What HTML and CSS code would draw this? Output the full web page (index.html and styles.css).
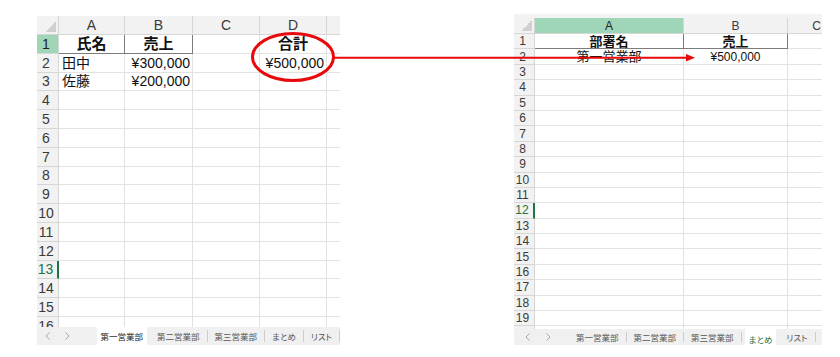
FILE: index.html
```html
<!DOCTYPE html>
<html lang="ja">
<head>
  <meta charset="UTF-8">
  <title>売上集計 - シート参照</title>
  <link rel="stylesheet" href="styles.css">
</head>
<body>
<div class="page">

  <!-- 左: 第一営業部シート -->
  <div class="sheet sheet-left">
    <div class="grid-wrap">
      <table class="grid">
        <colgroup>
          <col style="width:22px"><col style="width:66px"><col style="width:68px"><col style="width:67px"><col style="width:67px"><col style="width:67px">
        </colgroup>
        <tr class="col-head"><th class="corner"></th><th>A</th><th>B</th><th>C</th><th>D</th><th></th></tr>
        <tr><th class="row-sel">1</th><td class="h box">氏名</td><td class="h box">売上</td><td></td><td class="h">合計</td><td></td></tr>
        <tr><th>2</th><td class="txt">田中</td><td class="num">¥300,000</td><td></td><td class="num">¥500,000</td><td></td></tr>
        <tr><th>3</th><td class="txt">佐藤</td><td class="num">¥200,000</td><td></td><td></td><td></td></tr>
        <tr><th>4</th><td></td><td></td><td></td><td></td><td></td></tr>
        <tr><th>5</th><td></td><td></td><td></td><td></td><td></td></tr>
        <tr><th>6</th><td></td><td></td><td></td><td></td><td></td></tr>
        <tr><th>7</th><td></td><td></td><td></td><td></td><td></td></tr>
        <tr><th>8</th><td></td><td></td><td></td><td></td><td></td></tr>
        <tr><th>9</th><td></td><td></td><td></td><td></td><td></td></tr>
        <tr><th>10</th><td></td><td></td><td></td><td></td><td></td></tr>
        <tr><th>11</th><td></td><td></td><td></td><td></td><td></td></tr>
        <tr><th>12</th><td></td><td></td><td></td><td></td><td></td></tr>
        <tr><th class="row-cur">13</th><td></td><td></td><td></td><td></td><td></td></tr>
        <tr><th>14</th><td></td><td></td><td></td><td></td><td></td></tr>
        <tr><th>15</th><td></td><td></td><td></td><td></td><td></td></tr>
        <tr><th>16</th><td></td><td></td><td></td><td></td><td></td></tr>
      </table>
    </div>
    <div class="tabs">
      <div class="tab-nav">
        <svg width="5" height="8" viewBox="0 0 5 8"><polyline points="4.5,0.5 1,4 4.5,7.5" fill="none" stroke="#a8a8a8" stroke-width="1"/></svg>
        <svg width="5" height="8" viewBox="0 0 5 8"><polyline points="0.5,0.5 4,4 0.5,7.5" fill="none" stroke="#a8a8a8" stroke-width="1"/></svg>
      </div>
      <div class="tab active">第一営業部</div>
      <div class="tab">第二営業部</div>
      <div class="tab">第三営業部</div>
      <div class="tab">まとめ</div>
      <div class="tab">リスト</div>
    </div>
  </div>

  <!-- 右: まとめシート -->
  <div class="sheet sheet-right">
    <div class="grid-wrap">
      <table class="grid">
        <colgroup>
          <col style="width:21px"><col style="width:149px"><col style="width:104px"><col style="width:58px">
        </colgroup>
        <tr class="col-head"><th class="corner"></th><th class="col-sel">A</th><th>B</th><th>C</th></tr>
        <tr><th>1</th><td class="h box">部署名</td><td class="h box">売上</td><td></td></tr>
        <tr><th>2</th><td class="ctr jp">第一営業部</td><td class="ctr">¥500,000</td><td></td></tr>
        <tr><th>3</th><td></td><td></td><td></td></tr>
        <tr><th>4</th><td></td><td></td><td></td></tr>
        <tr><th>5</th><td></td><td></td><td></td></tr>
        <tr><th>6</th><td></td><td></td><td></td></tr>
        <tr><th>7</th><td></td><td></td><td></td></tr>
        <tr><th>8</th><td></td><td></td><td></td></tr>
        <tr><th>9</th><td></td><td></td><td></td></tr>
        <tr><th>10</th><td></td><td></td><td></td></tr>
        <tr><th>11</th><td></td><td></td><td></td></tr>
        <tr><th class="row-cur">12</th><td></td><td></td><td></td></tr>
        <tr><th>13</th><td></td><td></td><td></td></tr>
        <tr><th>14</th><td></td><td></td><td></td></tr>
        <tr><th>15</th><td></td><td></td><td></td></tr>
        <tr><th>16</th><td></td><td></td><td></td></tr>
        <tr><th>17</th><td></td><td></td><td></td></tr>
        <tr><th>18</th><td></td><td></td><td></td></tr>
        <tr><th>19</th><td></td><td></td><td></td></tr>
        <tr><th></th><td></td><td></td><td></td></tr>
      </table>
    </div>
    <div class="tabs">
      <div class="tab-nav">
        <svg width="5" height="8" viewBox="0 0 5 8"><polyline points="4.5,0.5 1,4 4.5,7.5" fill="none" stroke="#a8a8a8" stroke-width="1"/></svg>
        <svg width="5" height="8" viewBox="0 0 5 8"><polyline points="0.5,0.5 4,4 0.5,7.5" fill="none" stroke="#a8a8a8" stroke-width="1"/></svg>
      </div>
      <div class="tab">第一営業部</div>
      <div class="tab">第二営業部</div>
      <div class="tab">第三営業部</div>
      <div class="tab active"><span class="mark">まとめ</span></div>
      <div class="tab">リスト</div>
    </div>
  </div>

  <!-- 合計セルからまとめシートへの矢印 -->
  <svg class="callout" width="840" height="357" viewBox="0 0 840 357">
    <ellipse cx="293" cy="57" rx="40.5" ry="23.5" fill="none" stroke="#e8090d" stroke-width="3"/>
    <line x1="333" y1="57.8" x2="687" y2="57.8" stroke="#e8090d" stroke-width="2"/>
    <polygon points="686,54 695,57.8 686,61.6" fill="#e8090d"/>
  </svg>

</div>
</body>
</html>
```

FILE: styles.css
```css
body {
  margin: 0;
  background: #fff;
  font-family: "Liberation Sans", "Noto Sans CJK JP", sans-serif;
  color: #111;
}
.page {
  position: relative;
  display: flex;
  align-items: flex-start;
  width: 840px;
  height: 357px;
  padding-left: 37px;
  box-sizing: border-box;
}
.sheet {
  display: flex;
  flex-direction: column;
}
.sheet-left {
  margin-top: 16px;
  width: 303px;
}
.sheet-right {
  margin-top: 14px;
  margin-left: 174px;
  width: 308px;
}
.grid-wrap {
  overflow: hidden;
  box-sizing: border-box;
}
.sheet-left .grid-wrap {
  height: 311px;
}
.sheet-right .grid-wrap {
  height: 315px;
  border-top: 4px solid #f3f3f3;
}

/* grid */
.grid {
  border-collapse: separate;
  border-spacing: 0;
  table-layout: fixed;
}
.grid th, .grid td {
  padding: 0;
  border-right: 1px solid #e2e2e2;
  border-bottom: 1px solid #e2e2e2;
  white-space: nowrap;
  overflow: hidden;
  line-height: 1;
  box-sizing: border-box;
}
.grid th {
  background: #f2f2f2;
  color: #3a3a3a;
  font-weight: normal;
  border-color: #d6d6d6;
}
.grid tr > th:first-child {
  text-align: center;
  padding-right: 3px;
}
.col-head th {
  text-align: center;
}
.corner {
  background-image: linear-gradient(to top left, #d0d0d0 50%, transparent 50%) !important;
  background-size: 11px 11px !important;
  background-repeat: no-repeat !important;
  background-position: right 2px bottom 2px !important;
}
.grid th.row-sel, .grid th.col-sel {
  background: #a0d6b8;
  color: #222;
}
.grid th.row-cur {
  color: #217346;
  border-right: 2px solid #217346;
}

.h {
  font-weight: bold;
  text-align: center;
}
.box {
  border-right-color: #7c7c7c !important;
  border-bottom-color: #7c7c7c !important;
}
.txt {
  text-align: left;
  padding-left: 3px !important;
}
.num {
  text-align: right;
  padding-right: 2px !important;
}
.ctr {
  text-align: center;
}

/* left sheet sizes */
.sheet-left .grid {
  width: 357px;
  font-size: 14px;
}
.sheet-left .grid tr {
  height: 18.8px;
}
.sheet-left .grid tr.col-head {
  height: 19px;
}
.sheet-left .h {
  font-size: 15px;
}

/* right sheet sizes */
.sheet-right .grid {
  width: 332px;
  font-size: 12px;
}
.sheet-right .grid tr {
  height: 15.4px;
}
.sheet-right .grid tr.col-head {
  height: 16px;
}
.sheet-right .h, .sheet-right .jp {
  font-size: 13px;
}

/* sheet tabs */
.tabs {
  display: flex;
  align-items: stretch;
  background: #f0f0f0;
  font-size: 8.5px;
  color: #555;
  font-feature-settings: "palt";
  white-space: nowrap;
  overflow: hidden;
}
.sheet-left .tabs {
  height: 18px;
}
.sheet-right .tabs {
  height: 16px;
}
.tab-nav {
  display: flex;
  align-items: center;
  box-sizing: border-box;
}
.sheet-left .tab-nav {
  width: 58px;
  gap: 15px;
  padding-left: 8px;
}
.sheet-right .tab-nav {
  width: 55px;
  gap: 16px;
  padding-left: 11px;
}
.tab {
  display: flex;
  align-items: center;
  padding: 0 7px;
  margin: 3px 0;
  border-right: 1px solid #cdcdcd;
}
.tab.active {
  background: #fff;
  color: #222;
  margin: 0 3px;
  padding: 0 4px;
  border-right: none;
}
.sheet-right .tab.active {
  color: #217346;
}
.mark {
  padding: 2px 0 1px;
  border-bottom: 2px solid #217346;
  margin-top: 4px;
}

/* overlay arrow */
.callout {
  position: absolute;
  top: 0;
  left: 0;
  pointer-events: none;
}
```
